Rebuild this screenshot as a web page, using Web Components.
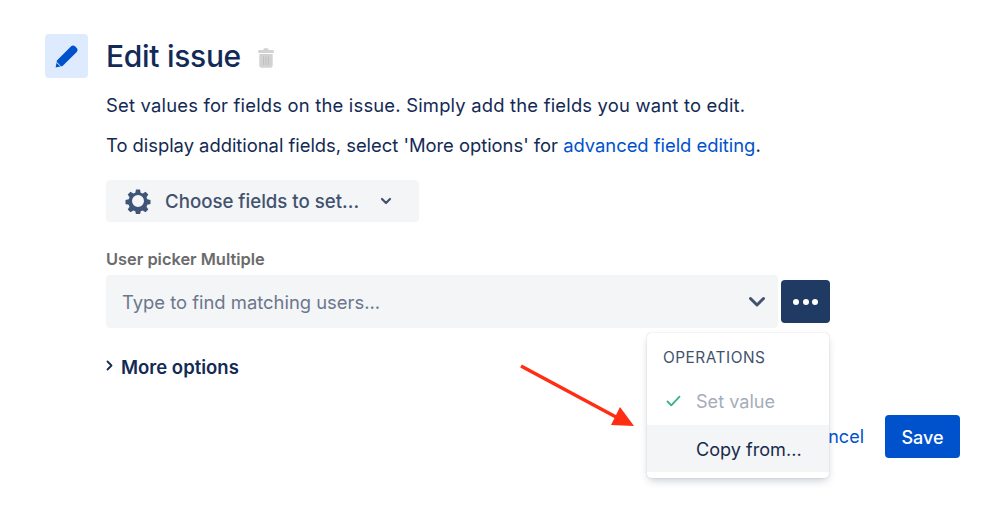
<!DOCTYPE html>
<html>
<head>
<meta charset="utf-8">
<title>Edit issue</title>
<style>
  html, body { margin: 0; background: #fff; }
  body { font-family: Inter, "Liberation Sans", sans-serif; color: #132a54; width: 999px; height: 527px; overflow: hidden; position: relative; }
</style>
</head>
<body>
<edit-issue></edit-issue>
<script>
class IssueHeader extends HTMLElement {
  constructor() {
    super();
    this.attachShadow({ mode: "open" }).innerHTML = `<style>
      :host { display: flex; align-items: center; }
      .badge { width: 43px; height: 44px; border-radius: 4px; background: #deebff; display: flex; align-items: center; justify-content: center; margin-right: 18px; }
      h1 { margin: 0; font-size: 30px; line-height: 44px; font-weight: 500; color: #122a57; letter-spacing: -0.3px; }
      .trash { margin-left: 17px; margin-top: 4px; display: block; }
    </style>
    <div class="badge">
      <svg width="26" height="26" viewBox="0 0 24 24"><path fill="#0052cc" d="M1.500 22.500l1.200-6.300L15.800 3.100c1-1 2.600-1 3.600 0l1.600 1.600c1 1 1 2.600 0 3.600L7.900 21.300z"/><path fill="#deebff" d="M2.400 17.300l4.300 4.300-.8.200-3.700-3.600z"/></svg>
    </div>
    <h1><slot></slot></h1>
    <svg class="trash" width="16" height="20" viewBox="0 0 16 20"><path fill="#d2d2d2" d="M5.500 1.500C5.500.7 6 .2 6.800.2h2.400c.8 0 1.300.5 1.300 1.300V2H14.600c.7 0 1.200.5 1.200 1.200V5H.2V3.200C.2 2.500.7 2 1.400 2H5.500z"/><path fill="#d2d2d2" d="M1.300 6h13.400v11.600c0 1.200-.9 2.100-2.100 2.100H3.400c-1.200 0-2.100-.9-2.100-2.100z"/><path fill="#c0c0c0" d="M5 8.500h1v8.500H5zM7.500 8.500h1v8.500h-1zM10 8.500h1v8.500h-1z"/></svg>`;
  }
}

class FieldChooser extends HTMLElement {
  constructor() {
    super();
    this.attachShadow({ mode: "open" }).innerHTML = `<style>
      :host { display: inline-flex; align-items: center; width: 313px; height: 42px; box-sizing: border-box; background: #f4f5f7; border-radius: 4px; padding-left: 19px; color: #42526e; font-size: 18.650px; font-weight: 500; }
      svg { display: block; flex: none; }
      .label { margin-left: 14px; margin-right: 21px; white-space: nowrap; }
    </style>
    <svg width="26" height="26" viewBox="0 0 26 26"><path fill="#3f5578" fill-rule="evenodd" d="M11 1.500h4l.7 3.200 2 .8 2.800-1.800 2.800 2.800-1.800 2.800.8 2 3.200.7v4l-3.200.7-.8 2 1.800 2.800-2.800 2.800-2.800-1.800-2 .8-.7 3.200h-4l-.7-3.200-2-.8-2.800 1.800-2.800-2.800 1.800-2.800-.8-2-3.200-.7v-4l3.200-.7.8-2-1.800-2.800 2.800-2.800 2.800 1.800 2-.8zM13 7a6 6 0 1 0 0 12 6 6 0 0 0 0-12z"/></svg>
    <span class="label"><slot></slot></span>
    <svg width="12" height="8" viewBox="0 0 12 8"><path fill="none" stroke="#42526e" stroke-width="2.200" stroke-linecap="round" stroke-linejoin="round" d="M2 2l4 4 4-4"/></svg>`;
  }
}

class UserPicker extends HTMLElement {
  constructor() {
    super();
    this.attachShadow({ mode: "open" }).innerHTML = `<style>
      :host { display: block; }
      .label { font-size: 16.400px; line-height: 20px; font-weight: 600; color: #6b6b6b; margin-bottom: 6px; }
      .row { display: flex; align-items: center; }
      .input { width: 672px; height: 53px; box-sizing: border-box; background: #f4f5f7; border-radius: 4px; padding: 1px 12px 0 16px; display: flex; align-items: center; justify-content: space-between; color: #6b778c; font-size: 18.400px; }
      .more { width: 49px; height: 43px; margin-left: 3px; background: #1f3a63; border-radius: 4px; display: flex; align-items: center; justify-content: center; gap: 3.500px; }
      .more i { width: 6px; height: 6px; border-radius: 50%; background: #fff; }
      svg { display: block; }
    </style>
    <div class="label"><slot name="label"></slot></div>
    <div class="row">
      <div class="input"><span><slot name="placeholder"></slot></span>
        <svg width="18" height="12" viewBox="0 0 18 12"><path fill="none" stroke="#42526e" stroke-width="3" stroke-linecap="round" stroke-linejoin="round" d="M2.500 2.500L9 9l6.500-6.500"/></svg>
      </div>
      <div class="more"><i></i><i></i><i></i></div>
    </div>`;
  }
}

class OperationsMenu extends HTMLElement {
  constructor() {
    super();
    this.attachShadow({ mode: "open" }).innerHTML = `<style>
      :host { display: block; position: absolute; left: 647px; top: 333px; width: 182px; height: 145px; background: #fff; border-radius: 4px; box-shadow: 0 4px 8px -2px rgba(9,30,66,.25), 0 0 1px rgba(9,30,66,.31); z-index: 2; }
      .head { font-size: 15.400px; font-weight: 400; color: #42526e; padding: 15px 16px 0; line-height: 20px; letter-spacing: .5px; }
      .item { display: flex; align-items: center; font-size: 18.100px; padding-left: 49px; position: relative; }
      .set { margin-top: 9px; height: 48px; color: #a5adba; }
      .copy { height: 47px; background: #f4f5f7; color: #172b4d; }
      svg { position: absolute; left: 19px; top: 18px; }
    </style>
    <div class="head">OPERATIONS</div>
    <div class="item set"><svg width="15" height="12" viewBox="0 0 15 12"><path fill="none" stroke="#36b37e" stroke-width="1.800" stroke-linecap="round" stroke-linejoin="round" d="M1.500 6.500l3.800 3.800 8.200-8.600"/></svg>Set value</div>
    <div class="item copy">Copy from...</div>`;
  }
}

class EditIssue extends HTMLElement {
  constructor() {
    super();
    this.attachShadow({ mode: "open" }).innerHTML = `<style>
      :host { display: block; padding: 34px 39px 0 45px; font-size: 18.400px; color: #132a54; }
      .body { margin-left: 61px; }
      p { margin: 0; line-height: 27px; }
      .first { margin-top: 14px; letter-spacing: .2px; }
      .second { margin-top: 13px; letter-spacing: -.02px; }
      a { color: #0052cc; text-decoration: none; }
      .choose { display: block; margin-top: 21px; }
      user-picker { margin-top: 27px; }
      .toggle { display: flex; align-items: center; margin-top: 26px; font-size: 18.500px; font-weight: 600; line-height: 26px; }
      .toggle svg { margin-right: 7px; margin-top: -4px; }
      .actions { display: flex; justify-content: flex-end; align-items: center; margin-top: 35px; }
      .actions a { margin-right: 21px; font-size: 18px; }
      button { border: 0; margin: 0; width: 75px; height: 43px; background: #0052cc; color: #fff; font: 500 18px Inter, "Liberation Sans", sans-serif; border-radius: 4px; padding: 1px 0 0; }
      .arrow { position: absolute; left: 515px; top: 360px; z-index: 3; }
    </style>
    <issue-header>Edit issue</issue-header>
    <div class="body">
      <p class="first">Set values for fields on the issue. Simply add the fields you want to edit.</p>
      <p class="second">To display additional fields, select 'More options' for <a href="#">advanced field editing</a>.</p>
      <div class="choose"><field-chooser>Choose fields to set...</field-chooser></div>
      <user-picker><span slot="label">User picker Multiple</span><span slot="placeholder">Type to find matching users...</span></user-picker>
      <div class="toggle"><svg width="8" height="11" viewBox="0 0 8 11"><path fill="none" stroke="#172b4d" stroke-width="1.800" stroke-linecap="round" stroke-linejoin="round" d="M1.500 1.500l4 4-4 4"/></svg>More options</div>
      <div class="actions"><a href="#">Cancel</a><button>Save</button></div>
    </div>
    <operations-menu></operations-menu>
    <svg class="arrow" width="125" height="72" viewBox="0 0 125 72"><path fill="none" stroke="#ff2d12" stroke-width="3.500" d="M6 6L101 57"/><path fill="#ff2d12" d="M119 66L96 65 105 47z"/></svg>`;
  }
}

customElements.define("issue-header", IssueHeader);
customElements.define("field-chooser", FieldChooser);
customElements.define("user-picker", UserPicker);
customElements.define("operations-menu", OperationsMenu);
customElements.define("edit-issue", EditIssue);
</script>
</body>
</html>
